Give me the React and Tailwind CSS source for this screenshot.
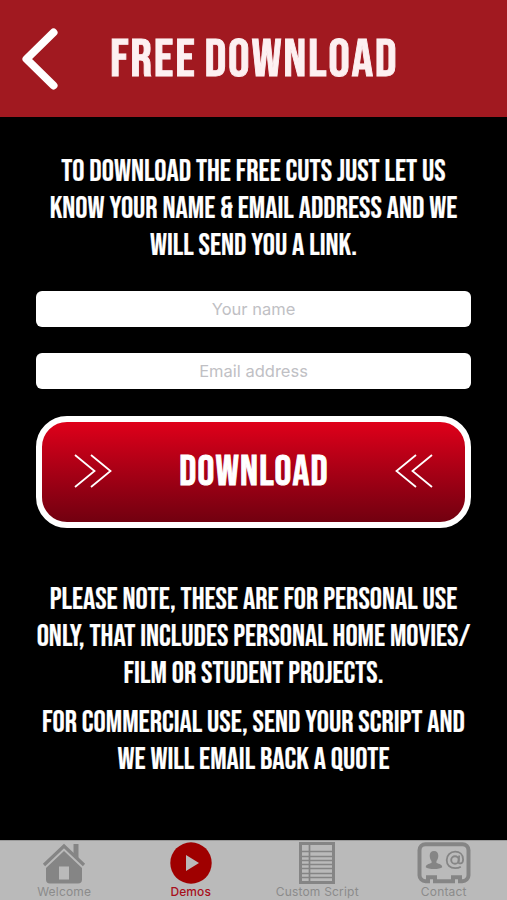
import React, { useState } from 'react';

function HomeIcon() {
  return (
    <svg className="h-[42px] w-[44px]" viewBox="0 0 44 42" fill="none">
      <path d="M31.500 2h5v15l-5-5z" fill="#858585" />
      <path d="M2 23L22 4l20 19" stroke="#858585" strokeWidth="3.200" />
      <path
        d="M22 9L40 26v11.500a4 4 0 01-4 4H8a4 4 0 01-4-4V26zM17 24.500v13h10V24.500z"
        fill="#858585"
        fillRule="evenodd"
      />
    </svg>
  );
}

function PlayIcon() {
  return (
    <svg className="h-[42px] w-[42px]" viewBox="0 0 42 42">
      <circle cx="21" cy="21" r="20.700" fill="#9f0000" />
      <path d="M16 13v16l13-8z" fill="#bababa" />
    </svg>
  );
}

function ScriptIcon() {
  return (
    <svg className="h-[42px] w-[36px]" viewBox="0 0 36 42" fill="none" stroke="#858585">
      <rect x="1.500" y="1.500" width="33" height="39" strokeWidth="3" />
      <path d="M10.500 3v36" strokeWidth="1.700" />
      <path d="M3 9.500h30M3 14.500h30M3 18.500h30M3 22.500h30M3 26.500h30M3 31.500h30M3 35.500h30" strokeWidth="1.700" />
    </svg>
  );
}

function ContactIcon() {
  return (
    <svg className="h-[42px] w-[54px]" viewBox="0 0 54 42" fill="none">
      <path
        d="M8.500 2.200h37a6 6 0 016 6v25a6 6 0 01-6 6h-2.500v-4h-7v4H18v-4h-7v4H8.500a6 6 0 01-6-6v-25a6 6 0 016-6z"
        stroke="#858585"
        strokeWidth="4"
      />
      <path
        d="M17 9c2.800 0 4.300 2 4.300 4.800 0 2.200-.8 4-1.800 5.200v2c2.800.9 5.700 1.700 5.700 4.200-2 2.400-14.400 2.400-16.400 0 0-2.500 2.900-3.300 5.700-4.200v-2c-1-1.200-1.800-3-1.800-5.200C12.700 11 14.200 9 17 9z"
        fill="#858585"
      />
      <circle cx="38" cy="18" r="3.800" stroke="#858585" strokeWidth="1.900" />
      <path
        d="M42.200 13.500l-.7 6.200c-.2 2.800 4.600 2.300 4.600-2.300 0-5-3.600-7.700-7.900-7.700-5 0-8.500 3.700-8.500 8.400 0 5 3.500 8.100 8.500 8.100 2.200 0 4-.5 5.600-1.500"
        stroke="#858585"
        strokeWidth="1.800"
      />
    </svg>
  );
}

function Chevrons({ className }) {
  return (
    <svg className={className} viewBox="0 0 38 34" fill="none" stroke="white" strokeWidth="1.800">
      <path d="M1 1l19.500 16L1 33M17 1l19.500 16L17 33" />
    </svg>
  );
}

const tabs = [
  { name: 'Welcome', icon: HomeIcon },
  { name: 'Demos', icon: PlayIcon },
  { name: 'Custom Script', icon: ScriptIcon },
  { name: 'Contact', icon: ContactIcon },
];

function TabBar({ active }) {
  return (
    <nav className="grid h-[60px] shrink-0 grid-cols-4 border-t border-[#9a9a9a] bg-[#bababa] pl-px">
      {tabs.map(({ name, icon: Icon }) => (
        <button key={name} className="flex flex-col items-center pt-[1px]">
          <Icon />
          <span
            className={`font-[Inter,sans-serif] text-[12px] leading-4 whitespace-nowrap ${
              name === active ? 'font-medium tracking-[0.1px] text-[#a8101c]' : 'tracking-[0.2px] text-[#8b8b8b]'
            }`}
          >
            {name}
          </span>
        </button>
      ))}
    </nav>
  );
}

function App() {
  const [name, setName] = useState('');
  const [email, setEmail] = useState('');

  const inputClass =
    'h-[36px] w-full rounded-[6px] bg-white pb-px text-center font-[Inter,sans-serif] text-[16.5px] text-gray-900 placeholder:text-[#c0c0c4] outline-none';

  return (
    <div className="flex h-[900px] w-[507px] flex-col overflow-hidden bg-black font-['Bebas_Neue','Roboto_Condensed',sans-serif] text-white">
      <header className="flex h-[117px] shrink-0 items-center bg-[#a11920] pl-[22px]">
        <button>
          <svg className="h-[62px] w-[36px]" viewBox="0 0 36 62" fill="none">
            <path d="M31.500 4.500L4.500 31l27 26.500" stroke="white" strokeWidth="8" strokeLinecap="round" strokeLinejoin="round" />
          </svg>
        </button>
        <h1 className="ml-[52px] pt-[3px] text-[54px] leading-none font-normal tracking-[1.75px] whitespace-nowrap text-[#fdf0f1] [-webkit-text-stroke:0.9px_#fdf0f1] [word-spacing:-2.5px]">
          FREE DOWNLOAD
        </h1>
      </header>

      <main className="flex flex-1 flex-col px-9 pt-[37px]">
        <p className="text-center text-[30.5px] leading-[36.8px] whitespace-nowrap [-webkit-text-stroke:0.2px_white]">
          TO DOWNLOAD THE FREE CUTS JUST LET US
          <br />
          KNOW YOUR NAME &amp; EMAIL ADDRESS AND WE
          <br />
          WILL SEND YOU A LINK.
        </p>

        <form className="mt-[27px] flex flex-col gap-[26px]" onSubmit={(e) => e.preventDefault()}>
          <input className={inputClass} placeholder="Your name" value={name} onChange={(e) => setName(e.target.value)} />
          <input className={inputClass} placeholder="Email address" value={email} onChange={(e) => setEmail(e.target.value)} />
          <button className="mt-px flex h-[112px] items-center justify-between rounded-[31px] border-[6px] border-white bg-linear-to-b from-[#e6001a] to-[#6c000f] bg-origin-border px-8 pb-[2px]">
            <Chevrons className="h-[34px] w-[38px]" />
            <span className="pt-[3px] pl-[1px] text-[42px] leading-none font-normal tracking-[1.2px] [-webkit-text-stroke:0.9px_white]">
              DOWNLOAD
            </span>
            <Chevrons className="h-[34px] w-[38px] rotate-180" />
          </button>
        </form>

        <div className="mt-[54px] flex flex-col gap-[12px] text-center text-[30.5px] leading-[36.8px] whitespace-nowrap [-webkit-text-stroke:0.2px_white]">
          <p>
            PLEASE NOTE, THESE ARE FOR PERSONAL USE
            <br />
            ONLY, THAT INCLUDES PERSONAL HOME MOVIES/
            <br />
            FILM OR STUDENT PROJECTS.
          </p>
          <p>
            FOR COMMERCIAL USE, SEND YOUR SCRIPT AND
            <br />
            WE WILL EMAIL BACK A QUOTE
          </p>
        </div>
      </main>

      <TabBar active="Demos" />
    </div>
  );
}

export default App;
